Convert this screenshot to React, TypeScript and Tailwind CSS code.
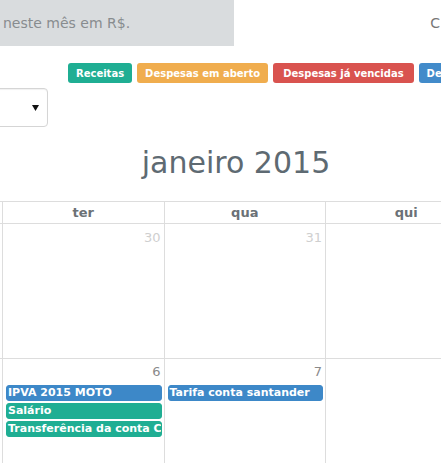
import React from "react";

const font = { fontFamily: '"DejaVu Sans", Verdana, sans-serif' };

type Ev = { title: string; color: string };

const days = [
  { label: "seg", r1: "29", r2: "5", ev: [] as Ev[] },
  { label: "ter", r1: "30", r2: "6", ev: [
    { title: "IPVA 2015 MOTO", color: "bg-[#3d88c8] border-[#3d88c8]" },
    { title: "Salário", color: "bg-[#1fae93] border-[#1fae93]" },
    { title: "Transferência da conta Corrente", color: "bg-[#1fae93] border-[#1fae93]" },
  ] },
  { label: "qua", r1: "31", r2: "7", ev: [
    { title: "Tarifa conta santander", color: "bg-[#3d88c8] border-[#3d88c8]" },
  ] },
  { label: "qui", r1: "1", r2: "8", ev: [] as Ev[] },
];

export default function App() {
  return (
    <div className="w-[441px] h-[463px] overflow-hidden bg-white text-[#676a6c]" style={font}>
      <div className="flex h-[46px]">
        <div className="w-[234px] h-[46px] bg-[#d9dcde] flex items-center pl-[3px] text-[14px] leading-[20px] text-[#888c8f]">
          neste mês em R$.
        </div>
        <div className="flex-1 flex items-center justify-end pr-[1px] text-[14px] leading-[20px] text-[#777]">
          <span>C</span>
        </div>
      </div>

      <div className="flex mt-[17px] pl-[68px] gap-[5px] whitespace-nowrap text-[10px] font-bold text-white">
        <span className="h-5 px-2 rounded-[3px] flex items-center bg-[#1fae93]">Receitas</span>
        <span className="h-5 px-2 rounded-[3px] flex items-center bg-[#f0ad4e]">Despesas em aberto</span>
        <span className="h-5 px-[10px] rounded-[3px] flex items-center bg-[#d9534f]">Despesas já vencidas</span>
        <span className="h-5 px-2 rounded-[3px] flex items-center bg-[#428bca]">Despesas pagas</span>
      </div>

      <div className="mt-[5px] flex">
        <div className="-ml-[13px] w-[61px] h-[39px] border border-[#d5d5d5] rounded-[4px] bg-white shadow-[inset_0_1px_1px_rgba(0,0,0,0.06)] flex items-center justify-end pr-[8px]">
          <svg width="7" height="6" viewBox="0 0 7 6"><path d="M0 0 L7 0 L3.5 6 Z" fill="#111" /></svg>
        </div>
      </div>

      <div className="mt-[18px] mb-[20px] pl-[31px] text-center text-[30px] leading-[36px] text-[#5e6a72]">
        janeiro 2015
      </div>

      <div className="-ml-[158.5px] grid grid-cols-[repeat(4,161.5px)] w-[646px]">
        {days.map((d) => (
          <div key={d.label} className="h-[23px] border-t border-b border-r border-[#dddddd] flex items-center justify-center text-[13px] font-bold text-[#6b7176]">
            {d.label}
          </div>
        ))}
        {days.map((d) => (
          <div key={d.label + "1"} className="h-[135px] border-b border-r border-[#dddddd] pt-[4px] pr-[3px] text-right text-[13px] leading-[20px] text-[#cfcfcf]">
            {d.r1}
          </div>
        ))}
        {days.map((d) => (
          <div key={d.label + "2"} className="h-[135px] border-r border-[#dddddd] pt-[3px]">
            <div className="pr-[3px] text-right text-[13px] leading-[20px] text-[#8a8a8a]">{d.r2}</div>
            <div className="mt-[3px] flex flex-col gap-[2px] pl-[3px] pr-[2px]">
              {d.ev.map((e) => (
                <div key={e.title} className={"h-4 border rounded-[3px] px-[1px] text-[11px] leading-[14px] font-bold text-white whitespace-nowrap overflow-hidden " + e.color}>
                  {e.title}
                </div>
              ))}
            </div>
          </div>
        ))}
      </div>
    </div>
  );
}
